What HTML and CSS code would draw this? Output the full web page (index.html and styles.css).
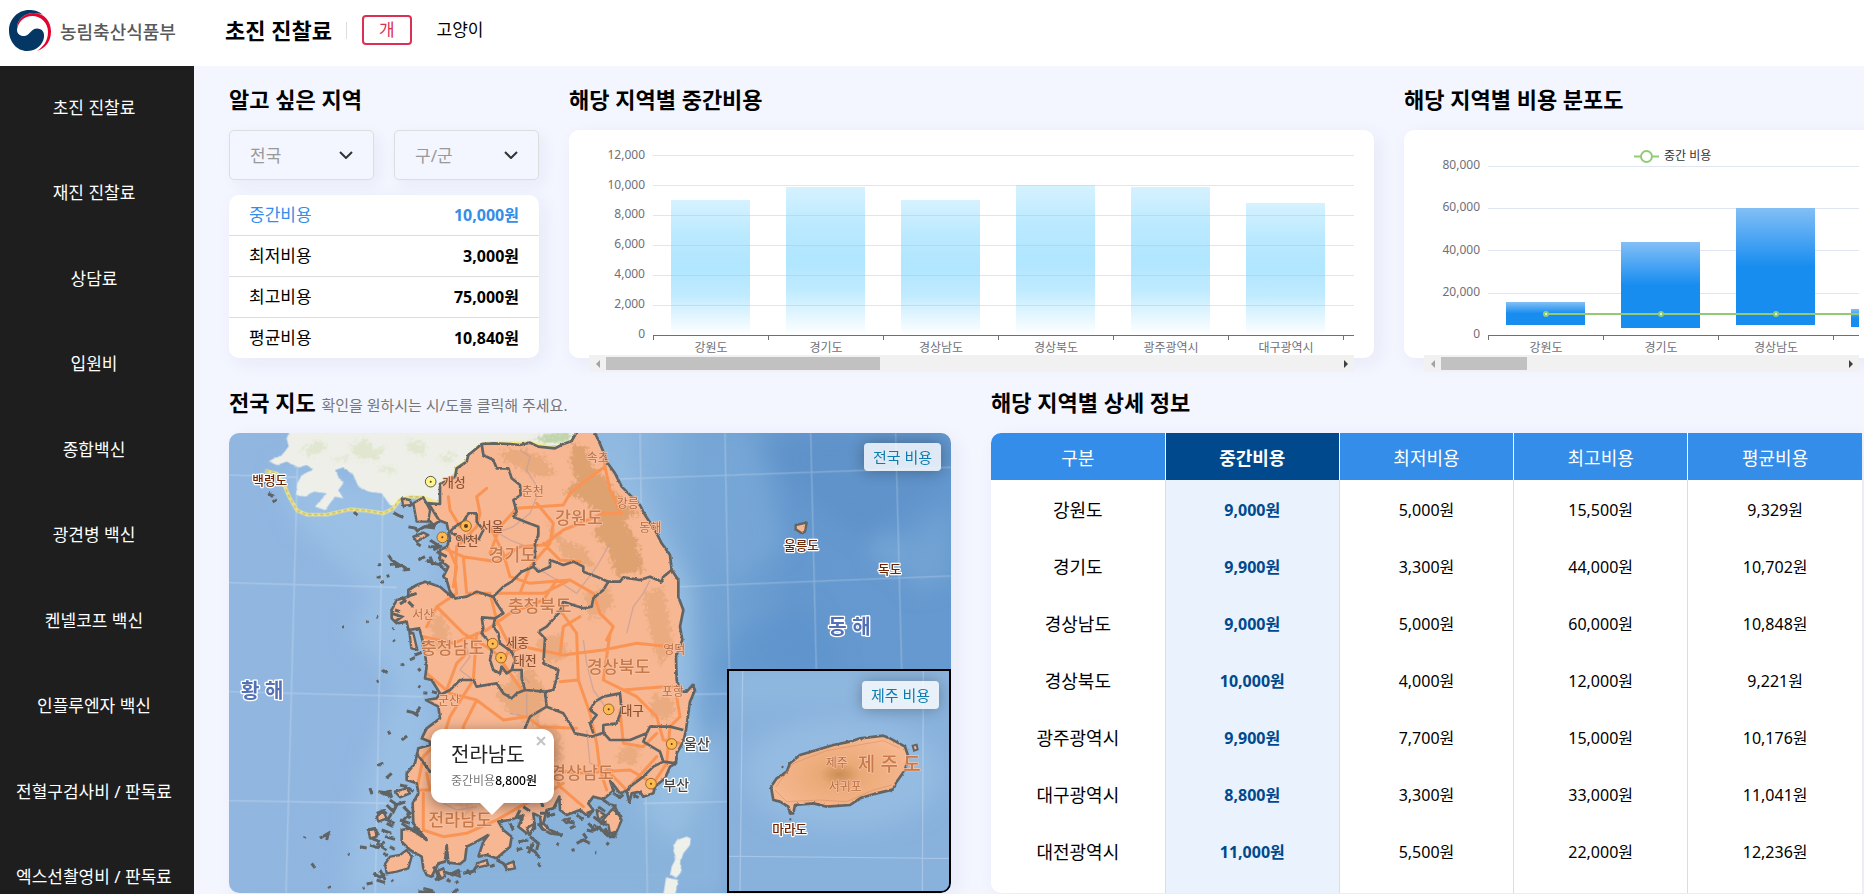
FILE: index.html
```html
<!DOCTYPE html>
<html lang="ko">
<head>
<meta charset="utf-8">
<title>초진 진찰료</title>
<link rel="stylesheet" href="styles.css">
</head>
<body>
<header class="topbar">
  <a class="brand" href="#">
    <svg class="brand-mark" viewBox="0 0 42 42" aria-hidden="true">
      <path fill="#e4032e" d="M8 20C7 10 15 3 24.500 3C35 3 42 11 42 21.500C42 31 37 38 28 41C34 37 39 31 39 22C39 12.500 31.500 6 23.500 6C15 6 9 12 8 20Z"/>
      <path fill="#043764" d="M8 20C8 25 14 28 19 24.500C22 22 24 18.500 28 18.500C33 18.500 35.500 22 35 27C34 35 27 41 18 41C8 41 0 32 0 20.500C0 9 9 0 20 0C25 0 30 1 34 5C31 3.500 28 3 24.500 3C15 3 7 10 8 20Z"/>
    </svg>
    <span>농림축산식품부</span>
  </a>
  <h1 class="page-title">초진 진찰료</h1>
  <div class="pets">
    <button class="pet pet-on" type="button">개</button>
    <button class="pet" type="button">고양이</button>
  </div>
</header>
<div class="shell">
  <nav class="side">
    <a href="#">초진 진찰료</a>
    <a href="#">재진 진찰료</a>
    <a href="#">상담료</a>
    <a href="#">입원비</a>
    <a href="#">종합백신</a>
    <a href="#">광견병 백신</a>
    <a href="#">켄넬코프 백신</a>
    <a href="#">인플루엔자 백신</a>
    <a href="#">전혈구검사비 / 판독료</a>
    <a href="#">엑스선촬영비 / 판독료</a>
  </nav>
  <main class="main">
    <div class="row row-top">
      <section>
        <h2>알고 싶은 지역</h2>
        <div class="picks">
          <div class="pick">
            <select aria-label="시/도"><option>전국</option></select>
            <svg viewBox="0 0 14 8" aria-hidden="true"><path d="M1 1l6 6 6-6" fill="none" stroke="#333" stroke-width="2"/></svg>
          </div>
          <div class="pick">
            <select aria-label="구/군"><option>구/군</option></select>
            <svg viewBox="0 0 14 8" aria-hidden="true"><path d="M1 1l6 6 6-6" fill="none" stroke="#333" stroke-width="2"/></svg>
          </div>
        </div>
        <dl class="stats">
          <div class="stat-on"><dt>중간비용</dt><dd>10,000원</dd></div>
          <div><dt>최저비용</dt><dd>3,000원</dd></div>
          <div><dt>최고비용</dt><dd>75,000원</dd></div>
          <div><dt>평균비용</dt><dd>10,840원</dd></div>
        </dl>
      </section>
      <section>
        <h2>해당 지역별 중간비용</h2>
        <div class="chart-card">
          <div class="chart-view">
            <svg class="chart" width="2020" height="225">
              <defs>
                <linearGradient id="sky" x1="0" y1="0" x2="0" y2="1">
                  <stop offset="0" stop-color="#87d9ff" stop-opacity=".35"/>
                  <stop offset=".25" stop-color="#68cfff" stop-opacity=".45"/>
                  <stop offset=".5" stop-color="#68cfff" stop-opacity=".52"/>
                  <stop offset=".7" stop-color="#68cfff" stop-opacity=".42"/>
                  <stop offset="1" stop-color="#68cfff" stop-opacity="0"/>
                </linearGradient>
              </defs>
              <path class="grid" d="M64 25.500H2020M64 55.500H2020M64 85.500H2020M64 115.500H2020M64 145.500H2020M64 175.500H2020"/>
              <g fill="url(#sky)">
                <rect x="82" y="70" width="79" height="135"/>
                <rect x="197" y="57" width="79" height="148"/>
                <rect x="312" y="70" width="79" height="135"/>
                <rect x="427" y="55" width="79" height="150"/>
                <rect x="542" y="57" width="79" height="148"/>
                <rect x="657" y="73" width="79" height="132"/>
              </g>
              <path class="axis" d="M64 205.500H2020M64.500 205v5M179.500 205v5M294.500 205v5M409.500 205v5M524.500 205v5M639.500 205v5M754.500 205v5"/>
              <g class="ylab"><text x="56" y="29">12,000</text><text x="56" y="59">10,000</text><text x="56" y="88">8,000</text><text x="56" y="118">6,000</text><text x="56" y="148">4,000</text><text x="56" y="178">2,000</text><text x="56" y="208">0</text></g>
              <g class="xlab"><text x="122" y="222">강원도</text><text x="237" y="222">경기도</text><text x="352" y="222">경상남도</text><text x="467" y="222">경상북도</text><text x="582" y="222">광주광역시</text><text x="697" y="222">대구광역시</text></g>
            </svg>
          </div>
          <div class="scroll"><span class="arrow arrow-l"></span><span class="track"><span class="thumb" style="width:37.500%"></span></span><span class="arrow arrow-r"></span></div>
        </div>
      </section>
      <section>
        <h2>해당 지역별 비용 분포도</h2>
        <div class="chart-card">
          <div class="chart-view">
            <svg class="chart" width="2020" height="225">
              <defs>
                <linearGradient id="blue" x1="0" y1="0" x2="0" y2="1">
                  <stop offset="0" stop-color="#83bff6"/><stop offset=".5" stop-color="#188df0"/><stop offset="1" stop-color="#188df0"/>
                </linearGradient>
              </defs>
              <path class="grid" d="M64 36.500H2020M64 78.500H2020M64 120.500H2020M64 163.500H2020"/>
              <g fill="url(#blue)">
                <rect x="82" y="172" width="79" height="23"/>
                <rect x="197" y="112" width="79" height="86"/>
                <rect x="312" y="78" width="79" height="117"/>
                <rect x="427" y="179" width="79" height="18"/>
              </g>
              <path class="axis" d="M64 205.500H2020M64.500 205v5M179.500 205v5M294.500 205v5M409.500 205v5"/>
              <path d="M122 184H2020" stroke="#91cc75" stroke-width="2"/>
              <g fill="#fff" stroke="#91cc75" stroke-width="2"><circle cx="122" cy="184" r="2"/><circle cx="237" cy="184" r="2"/><circle cx="352" cy="184" r="2"/></g>
              <path d="M210 26.500H235" stroke="#91cc75" stroke-width="2"/>
              <circle cx="222.500" cy="26.500" r="5.500" fill="#fff" stroke="#91cc75" stroke-width="2"/>
              <text class="legend" x="240" y="30">중간 비용</text>
              <g class="ylab"><text x="56" y="39">80,000</text><text x="56" y="81">60,000</text><text x="56" y="124">40,000</text><text x="56" y="166">20,000</text><text x="56" y="208">0</text></g>
              <g class="xlab"><text x="122" y="222">강원도</text><text x="237" y="222">경기도</text><text x="352" y="222">경상남도</text></g>
            </svg>
          </div>
          <div class="scroll"><span class="arrow arrow-l"></span><span class="track"><span class="thumb" style="width:21.500%"></span></span><span class="arrow arrow-r"></span></div>
        </div>
      </section>
    </div>
    <div class="row row-bottom">
      <section>
        <h2>전국 지도 <small>확인을 원하시는 시/도를 클릭해 주세요.</small></h2>
        <div class="map">
          <svg class="map-art" viewBox="57 159 2166 1380" preserveAspectRatio="xMidYMid slice" role="img" aria-label="전국 지도">
            <defs>
              <linearGradient id="sea" x1="0" y1="0" x2="1" y2="0">
                <stop offset="0" stop-color="#91b6e0"/><stop offset=".55" stop-color="#8fb8e0"/><stop offset=".66" stop-color="#76a6d5"/><stop offset=".78" stop-color="#6598ce"/><stop offset="1" stop-color="#6599cf"/>
              </linearGradient>
              <filter id="soft"><feGaussianBlur stdDeviation="32"/></filter>
              <filter id="rough" x="-5%" y="-5%" width="110%" height="110%"><feTurbulence type="fractalNoise" baseFrequency=".12" numOctaves="2" seed="4"/><feDisplacementMap in="SourceGraphic" scale="7" xChannelSelector="R" yChannelSelector="G"/></filter>
              <filter id="terrain" x="-10%" y="-10%" width="120%" height="120%"><feTurbulence type="fractalNoise" baseFrequency=".09" numOctaves="3" seed="9" result="n"/><feGaussianBlur in="SourceGraphic" stdDeviation="3" result="b"/><feDisplacementMap in="b" in2="n" scale="42" xChannelSelector="R" yChannelSelector="G"/></filter>
              <path id="korea" d="M690 372L690 312L735 292L740 265L770 245L775 225L800 205L815 192L850 190L900 192L930 195L960 188L985 200L1035 205L1060 192L1085 183L1095 165L1105 150L1150 150L1165 180L1180 215L1190 245L1215 280L1235 320L1265 350L1290 375L1305 405L1335 450L1355 490L1380 525L1385 570L1405 600L1405 650L1420 690L1410 740L1417 780L1398 830L1400 900L1412 935L1430 935L1448 915L1455 930L1440 965L1435 1000L1428 1050L1420 1085L1400 1120L1398 1150L1380 1160L1365 1195L1335 1220L1330 1240L1300 1250L1290 1235L1265 1240L1258 1268L1250 1232L1230 1240L1200 1200L1210 1232L1180 1258L1150 1250L1135 1270L1150 1290L1135 1310L1110 1290L1070 1305L1050 1290L1048 1250L1030 1285L1010 1290L1000 1330L1020 1350L1055 1365L1020 1360L995 1345L990 1310L970 1300L975 1345L950 1360L925 1340L940 1305L900 1320L865 1325L880 1350L905 1370L900 1400L860 1435L830 1425L805 1430L820 1385L835 1365L790 1390L770 1400L765 1440L750 1452L715 1448L710 1395L705 1445L685 1450L665 1490L650 1485L640 1465L635 1430L600 1410L575 1385L575 1350L600 1345L650 1380L610 1330L608 1270L625 1240L620 1210L590 1200L590 1180L615 1150L625 1105L660 1095L660 1085L635 1075L650 1045L690 1015L685 980L648 960L680 955L690 940L665 900L645 895L650 860L645 820L640 790L628 745L595 750L590 725L560 730L545 715L545 690L560 660L595 650L595 630L620 615L645 605L690 620L725 650L735 655L720 635L710 600L700 590L715 560L690 540L690 510L710 500L720 475L710 430L690 422L670 435L652 415L655 370Z"/>
              <clipPath id="landclip"><use href="#korea"/></clipPath>
            </defs>
            <rect x="57" y="159" width="2166" height="1380" fill="url(#sea)"/>
            <g filter="url(#soft)">
              <path fill="#9cc1e5" opacity=".85" d="M200 250L680 360L640 1540L400 1540L440 1250L560 900L420 760L480 640L250 420Z"/>
              <path fill="#8ab3dc" d="M700 1300L1450 1150L1560 1000L1560 1560L700 1560Z"/>
              <path fill="#96bee2" d="M1160 130L1330 420L1440 620L1450 1000L1500 1200L1400 1400L1300 1300L1300 600Z"/>
              <path fill="#79a8d7" opacity=".7" d="M1500 140L1620 150L1730 500L1560 600L1470 420Z"/>
              <path fill="#79a8d7" opacity=".6" d="M2223 380L2030 520L2120 640L2223 600Z"/>
              <path fill="#5589c4" opacity=".35" d="M1650 200L1800 160L2223 150L2223 300L1950 480L1800 360Z"/>
              <path fill="#5c92cb" opacity=".6" d="M1600 740L1800 680L1900 860L1500 900Z"/>
              <circle cx="2030" cy="510" r="40" fill="#78a9d8"/>
            </g>
            <path fill="none" stroke="#fff" stroke-opacity=".25" stroke-width="4" d="M265 159L228 1539M522 159L496 1539M1290 159L1312 1539M1545 159L1570 1539M1802 159L1835 1539M2057 159L2092 1539M57 285L262 292M57 608L560 622M57 935L640 950M57 1262L560 1270M1230 297L2223 262M1410 620L2223 588M1440 943L2223 930M1300 1270L1700 1262"/>
            <g filter="url(#rough)">
              <path fill="#eeefe8" d="M240 150L230 175L236 200L215 225L175 243L200 255L230 245L265 262L290 255L310 268L275 285L262 310L258 345L285 350L310 335L350 340L315 380L345 390L375 350L400 355L385 330L400 310L385 290L375 270L400 262L430 285L445 320L475 335L515 340L540 375L560 380L575 360L600 350L660 365L690 372L700 312L800 215L830 200L1100 195L1105 150Z"/>
            </g>
            <g fill="#dde5ca" opacity=".8" filter="url(#terrain)"><path d="M270 210L330 180L350 200L310 230ZM420 200L470 175L490 210L530 195L500 240L440 235ZM590 180L650 190L640 225L600 215ZM360 240L410 225L420 240ZM680 235L740 215L720 250ZM500 270L545 255L560 280Z"/><path fill="#b7cf9d" d="M960 180L1000 165L1020 155L1085 155L1070 185L1040 190L1000 185Z"/></g>
            <path filter="url(#rough)" fill="#eef0ea" d="M1430 1370L1442 1375L1440 1395L1420 1420L1410 1450L1415 1475L1400 1492L1380 1485L1385 1460L1395 1440L1390 1400L1400 1380ZM1368 1492L1405 1500L1395 1545L1360 1545Z"/>
            <g fill="none" stroke-linejoin="round"><path stroke="#f5e987" stroke-width="10" d="M165 272L200 280L220 310L240 355L262 392L290 404L350 404L420 388L470 392L520 400L550 385L568 360L600 350L640 352L690 374M690 312L735 290L740 263L770 243L800 203L830 190L960 188L1035 205L1085 183L1100 160"/><path stroke="#8d8448" stroke-width="2" stroke-dasharray="12 6" d="M165 272L200 280L220 310L240 355L262 392L290 404L350 404L420 388L470 392L520 400L550 385L568 360L600 350L640 352"/></g>
            <use href="#korea" fill="#f7b792" filter="url(#rough)"/>
            <g clip-path="url(#landclip)">
              <g fill="#d69a65" opacity=".75" filter="url(#terrain)">
                <path d="M1090 190L1130 200L1140 250L1190 300L1240 370L1290 400L1240 420L1280 480L1300 570L1220 590L1190 500L1150 460L1170 400L1100 350L1060 340L1100 300L1080 240Z"/>
                <path opacity=".6" d="M860 220L920 205L1000 230L1040 280L980 290L900 250ZM1010 420L1060 480L1120 500L1160 570L1060 530ZM900 900L960 860L1010 940L980 1040L900 1000L860 940Z"/>
                <path opacity=".5" d="M1120 640L1200 620L1210 680L1140 720ZM1300 640L1360 620L1390 800L1350 860L1320 760ZM1330 940L1400 960L1380 1020L1320 1010ZM960 1050L1040 1030L1060 1140L980 1140ZM1240 1100L1290 1100L1280 1160L1220 1140ZM740 1270L800 1280L770 1310ZM980 780L1050 760L1080 830L1010 850ZM660 720L700 700L720 780L680 820Z"/>
              </g>
              <path fill="none" stroke="#c39d9c" stroke-width="4" stroke-opacity=".7" d="M930 210L960 230L950 270L975 310L980 350L960 400L910 440L870 455M975 560L1040 600L1100 640L1160 560L1200 490M850 450L900 480L950 500M1320 600L1300 640L1270 680L1250 760M760 780L780 830L750 870L790 900M950 820L930 880L960 910M1120 780L1130 850L1150 930L1200 1000M1130 1050L1140 1150L1210 1170M700 1270L740 1290L800 1280M950 940L950 1010L900 1000"/>
              <path fill="none" stroke="#fa9454" stroke-width="9" stroke-linejoin="round" stroke-linecap="round" d="M830 325L800 350L810 400L800 440L740 500L735 600L740 640M715 350L720 390L750 440M690 500L760 530L860 545L930 500L1000 495L1060 450L1110 430L1180 400L1235 400M1235 400L1200 330L1185 260L1180 215M1185 260L1130 300L1080 340L1060 375L920 385L870 440L840 520M980 370L1030 430L1020 490L960 560L930 640M1000 490L1050 540L1110 545M760 530L770 640L840 640L860 720L900 800L880 850L935 930M840 440L880 520L900 590L960 610L1080 600L1150 640L1170 700L1210 740L1190 780M860 640L1000 640L1080 600M640 770L730 790L830 750L900 700L1000 660L1040 600M680 680L760 760L830 800L870 830L940 800L1060 825L1180 810L1280 790L1380 800M740 640L680 680L650 740M800 760L790 900L720 1010L700 1070L640 1130L620 1230L690 1230M650 880L720 940L800 960L880 1020L950 1010L990 1040L1100 1045M710 930L740 850L770 820M800 960L760 1040L760 1080M1050 690L1100 760L1105 900L1140 1000L1160 1090L1170 1170L1190 1230M1180 900L1240 930L1360 920L1440 920M1200 760L1190 830L1180 900L1280 950L1340 1010L1360 1080L1410 1090M1230 990L1240 1090L1300 1100L1340 1060M1400 950L1410 1010L1380 1040L1370 1150L1330 1210L1260 1170L1100 1180L1030 1170L1050 1220L1120 1280M1190 1170L1250 1230L1340 1130M640 1240L640 1350L700 1370L770 1360L860 1320L930 1280L1010 1240L1060 1210M650 1180L660 1230M700 470L740 560L730 620M1050 825L1060 740L1110 710M1105 900L1050 905"/>
            </g>
            <g filter="url(#rough)" fill="none" stroke="#626464" stroke-width="8" stroke-linejoin="round">
              <use href="#korea"/>
              <path d="M815 192L820 225L850 240L860 265L895 265L905 295L930 315L932 345L910 360L920 395L910 410L945 425L985 440L985 465L975 490L975 530L970 560L985 575L1020 560L1020 540L1060 555L1090 545L1120 560L1120 575L1160 590L1195 605L1230 605L1240 592L1290 600L1320 590L1355 605L1360 590L1385 570M735 655L770 650L800 635L850 650L880 620L905 605L935 575L970 560M850 650L860 670L880 700L855 715L815 712L820 745L815 760L840 790L845 815L840 840L850 870L870 880L875 860L890 880L905 870L915 840L905 815L870 790L865 760L850 740L855 715M905 870L935 870L935 895L945 930L920 940L905 955L880 940L860 910L800 920L790 900L750 900L720 930L690 945M1195 605L1180 630L1150 655L1145 680L1120 685L1060 665L1050 695L1010 740L985 755L1005 775L1000 850L1045 870L1040 895L1030 930L1005 935L945 930M1005 935L1010 980L960 1010L945 1045L930 1110L960 1200L1000 1280M1010 980L1060 1000L1085 1040L1095 1060L1145 1070L1180 1058L1180 1035L1220 1030L1235 990L1230 940L1180 950L1155 965L1140 990L1160 1005L1140 1030L1150 1060M1180 1058L1200 1080L1260 1080L1310 1060L1320 1040L1380 1040L1420 1050M1310 1060L1300 1085L1350 1115L1360 1145L1398 1150M1360 1145L1330 1160L1300 1190L1260 1220L1250 1240M720 455L735 440L760 425L775 400L800 400L800 425L820 450L805 480L780 470L760 480ZM720 455L710 475M655 370L690 425M620 1120L660 1175L720 1160"/>
            </g>
            <g filter="url(#rough)" fill="#f7b792" stroke="#626464" stroke-width="7" stroke-linejoin="round">
              <path d="M610 370L640 352L660 390L655 425L620 425ZM575 355L600 360L605 375L580 378ZM525 1452L540 1430L570 1425L590 1410L605 1430L595 1465L560 1475L530 1480ZM1215 1280L1235 1320L1220 1355L1200 1360L1195 1335L1170 1330L1200 1295ZM610 470L640 458L655 465L620 485ZM598 755L610 760L622 810L604 805ZM515 1240L540 1232L545 1250ZM555 1235L590 1225L600 1240L570 1252ZM500 1310L520 1295L530 1315L505 1325ZM475 1350L495 1345L500 1370L480 1375ZM800 1450L830 1440L835 1455L805 1462ZM680 1475L700 1465L705 1490L685 1500ZM725 1480L745 1470L750 1490ZM885 1455L910 1445L915 1465L890 1470ZM950 1345L975 1330L960 1365ZM165 298L188 294L185 310L172 315Z"/>
              <path d="M1757 435L1790 428L1785 455L1775 460L1757 448ZM1160 1290L1185 1305L1165 1320ZM1060 1320L1080 1315L1070 1330Z"/>
            </g>
            <path filter="url(#rough)" fill="none" stroke="#606464" stroke-width="9" d="M550 398l15 8 15 6M595 440l20 4 10 12M625 450l20-10 30 4M620 490l12 8M650 435l30 0M660 480l30 20-20 10M655 500l35 0M535 525l10 15 15 10-20 4M505 555l8-2M500 590l12 2M510 607l12-2M530 590l8-4M555 560l20-4 15 10M580 570l20-2M625 540l20-10M650 540l20 10 20 4 10-15M690 555l20 20M680 515l30 15M660 530l10 25M545 700l30 10-20 15M575 650l10 12-15 10M590 650l30-10M555 690l15 5M595 665l15 15M470 723l4 4M548 748l4-4M500 711l4 2M396 740l6 0M432 396l10 10M175 340l14 10M188 366l12-8M590 993l20 5 15 10M620 1000l10-20M575 1080l16-12M535 1053l5 10M502 1157l18-8M515 870l18 8M500 905l6-2M575 850l6 8M600 840l15-8M615 825l20-8M625 865l6 8M625 918l6 4M640 938l12 2M665 935l16 4M550 780l4 4M480 1225l6 18M505 1235l30 4 10 14M545 1180l-16 14M540 1260l20 14 25-8M570 1215l20 5 20 15M530 1275l20 20 10-20M580 1280l20 20-20 20M545 1300l-12 20 20 10M590 1300l12 14M500 1300l20-8 10 10M470 1350l24-4 12 20M485 1375l25 10M450 1400l20 4M500 1390l30 20M480 1395l24 8 20-18M515 1350l30 10M525 1370l30 8M570 1320l30 10M575 1330l40 25M610 1340l40 40M530 1330l20 10M540 1400l14 8M520 1420l14 6M285 1370l-2 4M330 1375l25-15-5 20M305 1450l10 14M355 1520l4 4M413 1422l6 2M490 1480l20 12 15-10M500 1500l25 8M510 1470l16 30M458 1525l6-2M470 1512l18-4M545 1500l4 4M640 1525l30 8M625 1535l50 4M725 1540l20-12M700 1475l30 10 20-14M670 1460l20 30-15 10M710 1500l12 4M760 1480l30-6 10-16M770 1470l14 12M735 1510l10-6M840 1460l14-5M860 1440l20 10 10 14M920 1410l16-5M900 1330l10 20M930 1290l-10 20 20 10M940 1280l20 14M960 1370l25 20-5 20M950 1400l25 15 15 20M970 1390l-15 30M985 1450l6 10M925 1385l30-5M1085 1412l8-4M1100 1390l20-10 20 10M1120 1360l10 16M1135 1330l18 20 20-10M1150 1310l20 15 20 0M1165 1280l20 15M1180 1260l20 14 20 4M1150 1335l25 14 20 20M1130 1350l20 5M1185 1345l15 25 20-12M1210 1290l24 20M1200 1370l20 0M1190 1395l6-8M1155 1418l4 0M1070 1325l24 4M1080 1345l16-8M1090 1410l4 0M1040 1390l6 4M1100 1305l20 14M1130 1300l20-8M1210 1240l20 12 10-8M1270 1245l16 8M990 1300l30 0M1010 1310l25-8M985 1330l15 20"/>
            <g stroke="#9b6a25" stroke-width="3" fill="#ffb951"><circle cx="662" cy="305" r="16" fill="#fff58a" stroke="#555"/><circle cx="768" cy="438" r="16"/><circle cx="697" cy="472" r="16"/><circle cx="848" cy="791" r="16"/><circle cx="873" cy="833" r="16"/><circle cx="1196" cy="988" r="16"/><circle cx="1385" cy="1092" r="16"/><circle cx="1323" cy="1211" r="16"/></g>
            <g fill="#5b3a1c"><circle cx="662" cy="305" r="3"/><circle cx="768" cy="438" r="6"/><circle cx="697" cy="472" r="3"/><circle cx="848" cy="791" r="3"/><circle cx="873" cy="833" r="3"/><circle cx="1196" cy="988" r="3"/><circle cx="1385" cy="1092" r="3"/><circle cx="1323" cy="1211" r="3"/></g>
            <g class="lab-town"><text x="1130" y="245">속초</text><text x="935" y="347">춘천</text><text x="1220" y="383">강릉</text><text x="1288" y="457">동해</text><text x="607" y="717">서산</text><text x="684" y="975">군산</text><text x="1360" y="821">영덕</text><text x="1355" y="948">포항</text></g>
            <g class="lab-city"><text x="697" y="322">개성</text><text x="810" y="453">서울</text><text x="735" y="494">인천</text><text x="887" y="800">세종</text><text x="910" y="855">대전</text><text x="1232" y="1005">대구</text></g>
            <g class="lab-city lab-out"><text x="1422" y="1108">울산</text><text x="1360" y="1229">부산</text></g>
            <g class="lab-prov"><text x="1035" y="432">강원도</text><text x="835" y="544">경기도</text><text x="893" y="696">충청북도</text><text x="632" y="822">충청남도</text><text x="1130" y="878">경상북도</text><text x="1020" y="1196">경상남도</text><text x="655" y="1338">전라남도</text></g>
            <g class="lab-isle"><text x="127" y="316">백령도</text><text x="1722" y="509">울릉도</text><text x="2004" y="582">독도</text></g>
            <g class="lab-sea"><text x="93" y="955">황 해</text><text x="1855" y="762">동 해</text></g>
          </svg>
          <button class="map-btn" type="button">전국 비용</button>
          <div class="popup">
            <button class="popup-x" type="button" aria-label="닫기"><svg viewBox="0 0 10 10" aria-hidden="true"><path d="M1 1l8 8M9 1l-8 8" stroke="#c3c3c3" stroke-width="2"/></svg></button>
            <p class="popup-name">전라남도</p>
            <p class="popup-cost">중간비용<b>8,800원</b></p>
          </div>
          <div class="inset">
            <svg class="map-art" viewBox="507 123 660 660" preserveAspectRatio="xMidYMid slice" role="img" aria-label="제주 지도">
              <defs>
                <radialGradient id="halla"><stop offset="0" stop-color="#c98d55"/><stop offset=".3" stop-color="#eaaa77"/><stop offset="1" stop-color="#f6b68e"/></radialGradient>
                <path id="jeju" d="M633 470L650 445L680 425L690 400L720 375L770 360L820 345L870 335L900 325L970 317L990 325L1035 350L1045 380L1035 420L1010 455L1000 478L950 490L900 505L870 525L800 530L760 520L705 525L700 550L690 550L685 530L660 515L640 510Z"/>
              </defs>
              <rect x="507" y="123" width="660" height="660" fill="#88b1dc"/>
              <g filter="url(#soft)"><ellipse cx="850" cy="430" rx="300" ry="170" fill="#94bbe1"/><path fill="#8fb8df" d="M507 123H1167V220H507Z"/></g>
              <path stroke="#fff" stroke-opacity=".25" stroke-width="4" d="M548 123L540 783M1090 123L1087 783M507 679L1167 685"/>
              <use href="#jeju" fill="url(#halla)" stroke="#626464" stroke-width="8" stroke-linejoin="round" filter="url(#rough)"/>
              <path fill="none" stroke="#dc8f68" stroke-opacity=".6" stroke-width="3" d="M648 470L700 400L800 362L970 332L1020 355M645 480L680 515L780 510L860 515L940 480L995 465"/>
              <path fill="#f7b792" stroke="#626464" stroke-width="6" d="M1058 347L1070 344L1073 358L1062 362ZM665 413l5-4M690 565l2 6"/>
              <g class="lab-town"><text x="797" y="410">제주</text><text x="806" y="482">서귀포</text></g>
              <g class="lab-prov lab-jeju"><text x="893" y="422">제 주 도</text></g>
              <g class="lab-isle"><text x="637" y="613">마라도</text></g>
            </svg>
            <button class="map-btn" type="button">제주 비용</button>
          </div>
        </div>
      </section>
      <section>
        <h2>해당 지역별 상세 정보</h2>
        <div class="table-card">
          <table>
            <thead><tr><th>구분</th><th class="mid">중간비용</th><th>최저비용</th><th>최고비용</th><th>평균비용</th></tr></thead>
            <tbody>
              <tr><th>강원도</th><td class="mid">9,000원</td><td>5,000원</td><td>15,500원</td><td>9,329원</td></tr>
              <tr><th>경기도</th><td class="mid">9,900원</td><td>3,300원</td><td>44,000원</td><td>10,702원</td></tr>
              <tr><th>경상남도</th><td class="mid">9,000원</td><td>5,000원</td><td>60,000원</td><td>10,848원</td></tr>
              <tr><th>경상북도</th><td class="mid">10,000원</td><td>4,000원</td><td>12,000원</td><td>9,221원</td></tr>
              <tr><th>광주광역시</th><td class="mid">9,900원</td><td>7,700원</td><td>15,000원</td><td>10,176원</td></tr>
              <tr><th>대구광역시</th><td class="mid">8,800원</td><td>3,300원</td><td>33,000원</td><td>11,041원</td></tr>
              <tr><th>대전광역시</th><td class="mid">11,000원</td><td>5,500원</td><td>22,000원</td><td>12,236원</td></tr>
            </tbody>
          </table>
        </div>
      </section>
    </div>
  </main>
</div>
</body>
</html>
```
FILE: styles.css
```css
* { box-sizing: border-box; }
body {
  margin: 0;
  background: #f3f6ff;
  color: #000;
  font-family: "Noto Sans", "Noto Sans CJK KR", sans-serif;
  font-size: 16px;
  overflow: hidden;
}
button, select { font: inherit; }
a { color: inherit; text-decoration: none; }
h1, h2, p, dl, dd { margin: 0; }

.topbar {
  display: flex;
  align-items: center;
  height: 66px;
  padding: 0 9px 14px;
  background: #fff;
}
.brand {
  display: flex;
  align-items: center;
  gap: 9px;
  width: 216px;
  padding-top: 9px;
  color: #58595b;
  font-size: 18px;
  font-weight: 500;
}
.brand-mark { width: 42px; height: 42px; }
.page-title {
  padding: 7px 14px 0 0;
  font-size: 22px;
  line-height: 30px;
}
.pets {
  display: flex;
  align-items: center;
  gap: 8px;
  margin-top: 8px;
  padding-left: 16px;
  background: linear-gradient(#ddd, #ddd) 0 center / 1px 17px no-repeat;
}
.pet {
  height: 30px;
  padding: 0 15px;
  border: 2px solid transparent;
  border-radius: 4px;
  background: none;
  font-size: 17px;
  line-height: 24px;
}
.pet-on { border-color: #dc3052; color: #dc3052; }

.shell { display: flex; }
.side {
  display: flex;
  flex: 0 0 194px;
  flex-direction: column;
  justify-content: space-between;
  height: calc(100vh - 66px);
  padding: 30px 6px 5px 0;
  background: #1e1e1e;
  color: #fff;
  font-size: 17px;
  line-height: 24px;
  text-align: center;
  white-space: nowrap;
}
.side a { display: block; }

.main {
  flex: 1;
  min-width: 0;
  padding: 19px 2px 0 35px;
  overflow: hidden;
}
.row { display: grid; }
.row > section { min-width: 0; }
.row-top {
  grid-template-columns: 310fr 805fr 475fr;
  gap: 30px;
  margin: 0 -17px 30px 0;
}
.row-bottom { grid-template-columns: 722fr 871fr; gap: 40px; }
h2 {
  height: 30px;
  margin-bottom: 15px;
  font-size: 22px;
  line-height: 28px;
  white-space: nowrap;
}
h2 small { color: #777; font-size: 15px; font-weight: 400; }

.picks { display: flex; gap: 20px; margin-bottom: 15px; }
.pick { position: relative; flex: 1; }
.pick select {
  width: 100%;
  height: 50px;
  padding: 0 20px;
  border: 1px solid #ddd;
  border-radius: 5px;
  background: #f3f6ff;
  box-shadow: 5px 5px 15px rgba(30, 40, 110, .05);
  color: #999;
  font-size: 17px;
  appearance: none;
}
.pick svg {
  position: absolute;
  top: 21px;
  right: 21px;
  width: 14px;
  height: 8px;
  pointer-events: none;
}
.stats, .chart-card, .map, .table-card {
  border-radius: 10px;
  background: #fff;
  box-shadow: 5px 5px 20px rgba(30, 40, 110, .06);
}
.stats > div {
  display: flex;
  justify-content: space-between;
  padding: 0 20px;
  line-height: 40px;
}
.stats > div + div { border-top: 1px solid #ddd; }
.stats dt { font-size: 17px; }
.stats dd { font-weight: 700; }
.stats .stat-on { color: #338de9; }

.chart-card { height: 228px; padding: 0 20px; }
.chart-view { overflow: hidden; }
.chart { display: block; font-size: 12px; }
.grid { fill: none; stroke: #e0e6f1; }
.axis { fill: none; stroke: #6e7079; }
.ylab { fill: #6e7079; text-anchor: end; }
.xlab { fill: #6e7079; text-anchor: middle; }
.legend { fill: #333; }
.scroll { display: flex; height: 17px; background: #f1f1f1; }
.track { flex: 1; padding: 2px 0; }
.thumb { display: block; height: 13px; background: #c1c1c1; }
.arrow { display: grid; width: 17px; place-items: center; }
.arrow::before { content: ""; border: 4px solid transparent; }
.arrow-l::before { border-right-color: #a3a3a3; border-left-width: 0; }
.arrow-r::before { border-left-color: #404040; border-right-width: 0; }

.map {
  position: relative;
  height: 460px;
  overflow: hidden;
}
.map-art { display: block; width: 100%; height: 100%; font-family: "Noto Sans CJK KR", sans-serif; }
.map-art text { paint-order: stroke; stroke-linejoin: round; }
.lab-town { fill: #b66c42; stroke: #fbc3a3; stroke-width: 4px; font-size: 36px; }
.lab-city { fill: #8f5234; stroke: #f9bb98; stroke-width: 4px; font-size: 38px; font-weight: 500; }
.lab-out { fill: #444; stroke: #fff; stroke-width: 7px; font-size: 42px; }
.lab-prov { fill: #c77a4c; stroke: #fbc5a6; stroke-width: 4px; font-size: 52px; font-weight: 500; }
.lab-jeju { font-size: 57px; }
.lab-isle { fill: #6f2400; stroke: #fff; stroke-width: 7px; font-size: 38px; font-weight: 500; }
.lab-sea { fill: #5371b4; stroke: #fff; stroke-width: 8px; font-size: 60px; font-weight: 700; }
.map-btn {
  position: absolute;
  top: 10px;
  right: 10px;
  height: 28px;
  padding: 0 9px;
  border: 0;
  border-radius: 4px;
  background: rgba(255, 255, 255, .8);
  box-shadow: 0 0 15px rgba(0, 0, 0, .3);
  color: #0c7cae;
  font-size: 15px;
  line-height: 28px;
}
.inset {
  position: absolute;
  right: 0;
  bottom: 0;
  width: 224px;
  height: 224px;
  border: 2px solid #000;
  border-radius: 0 0 10px 0;
  overflow: hidden;
}
.popup {
  position: absolute;
  top: 296px;
  left: 202px;
  width: 123px;
  height: 74px;
  padding: 12px 10px 0 20px;
  border-radius: 12px;
  background: #fff;
  box-shadow: 0 3px 14px rgba(0, 0, 0, .4);
  white-space: nowrap;
}
.popup::after {
  content: "";
  position: absolute;
  top: 74px;
  left: 49px;
  border: 12px solid transparent;
  border-top-color: #fff;
  border-bottom-width: 0;
}
.popup-x {
  position: absolute;
  top: 7px;
  right: 8px;
  width: 10px;
  height: 10px;
  padding: 0;
  border: 0;
  background: none;
}
.popup-x svg { display: block; }
.popup-name { color: #222; font-size: 20px; line-height: 28px; }
.popup-cost { color: #777; font-size: 12px; line-height: 24px; }
.popup-cost b { color: #000; font-weight: 500; }

.table-card { border-radius: 10px 0 0 10px; overflow: hidden; }
table { width: 100%; border-collapse: collapse; table-layout: fixed; }
th, td { height: 57px; padding: 0; font-weight: 400; text-align: center; }
th { font-size: 18px; }
td { font-size: 16px; }
thead th { height: 47px; background: #338de9; color: #fff; }
thead th + th { border-left: 1px solid #fff; }
thead .mid { background: #00498d; font-weight: 700; }
td { border-left: 1px solid #ddd; }
td.mid { background: #eaf2fd; color: #00498d; font-weight: 700; }
tbody tr:last-child > * { height: 71px; padding-bottom: 14px; }
```
